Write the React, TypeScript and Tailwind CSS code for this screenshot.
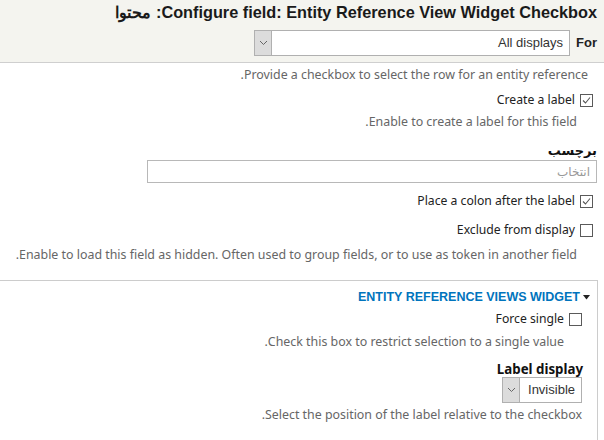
import React from "react";

const body = { fontFamily: '"Noto Sans", "DejaVu Sans", sans-serif' };
const arial = { fontFamily: '"Liberation Sans", Arial, sans-serif' };

function Check({ checked }: { checked?: boolean }) {
  return (
    <span className="inline-flex h-[13px] w-[13px] shrink-0 items-center justify-center border border-[#5a5a5a] bg-white">
      {checked && (
        <svg width="11" height="11" viewBox="0 0 11 11">
          <path d="M2 5.5 L4.5 8 L9 2.5" fill="none" stroke="#555" strokeWidth="1.1" />
        </svg>
      )}
    </span>
  );
}

function CheckRow({ label, checked }: { label: string; checked?: boolean }) {
  return (
    <div className="flex h-[16px] items-center gap-[5px] text-[12.2px] leading-[16px] text-[#222]">
      <Check checked={checked} />
      <span>{label}</span>
    </div>
  );
}

function Desc({ children }: { children: React.ReactNode }) {
  return <div className="text-[12.4px] leading-[16px] text-[#666]">{children}</div>;
}

function Select({ value, width }: { value: string; width: string }) {
  return (
    <div className={`flex h-[26px] items-stretch border border-[#b0b0b0] bg-white ${width}`}>
      <span className="flex-1 pr-[6px] text-[13px] leading-[24px] text-[#333]" style={arial}>
        {value}
      </span>
      <span className="flex w-[17px] items-center justify-center border-r border-[#b0b0b0] bg-[#dcdcdc]">
        <svg width="9" height="6" viewBox="0 0 9 6">
          <path d="M1 1 L4.5 4.5 L8 1" fill="none" stroke="#666" strokeWidth="1" />
        </svg>
      </span>
    </div>
  );
}

export default function App() {
  return (
    <div dir="rtl" className="h-[440px] w-[604px] overflow-hidden bg-white" style={body}>
      <div className="border-b border-[#cfcfcf] bg-[#f4f4ef] pb-[6px] pr-[7px] pt-[3px]">
        <h1 className="text-[16.3px] font-bold leading-[19px] text-[#1a1a1a]" style={arial}>
          Configure field: Entity Reference View Widget Checkbox: محتوا
        </h1>
        <div className="mt-[8px] flex items-center gap-[6px]">
          <span className="text-[13px] font-bold text-[#222]" style={arial}>For</span>
          <Select value="All displays" width="w-[316px]" />
        </div>
      </div>

      <div className="pr-[16px] pt-[4px]">
        <Desc>Provide a checkbox to select the row for an entity reference.</Desc>
      </div>

      <div className="pr-[11px] pt-[9px]">
        <CheckRow label="Create a label" checked />
      </div>
      <div className="pr-[27px] pt-[6px]">
        <Desc>Enable to create a label for this field.</Desc>
      </div>

      <div className="pr-[7px] pt-[12px]">
        <div className="text-[13px] font-bold leading-[16px] text-[#111]">برچسب</div>
        <div className="mt-[2px] h-[23px] w-[450px] border border-[#b8b8b8] bg-white pr-[6px] text-[12px] leading-[21px] text-[#999]">
          انتخاب
        </div>
      </div>

      <div className="pr-[11px] pt-[10px]">
        <CheckRow label="Place a colon after the label" checked />
      </div>
      <div className="pr-[11px] pt-[13px]">
        <CheckRow label="Exclude from display" />
      </div>
      <div className="pr-[27px] pt-[9px]">
        <Desc>Enable to load this field as hidden. Often used to group fields, or to use as token in another field.</Desc>
      </div>

      <div className="-ml-[4px] mr-[6px] mt-[17px] border border-[#ccc] pb-[20px]">
        <div className="mt-[8px] flex h-[16px] items-center gap-[3px] pr-[7px]">
          <svg width="7" height="5" viewBox="0 0 7 5">
            <path d="M0 0 L7 0 L3.5 4.5 Z" fill="#222" />
          </svg>
          <span className="text-[12.5px] font-bold leading-[16px] text-[#0074bd]" style={arial}>
            ENTITY REFERENCE VIEWS WIDGET
          </span>
        </div>
        <div className="pr-[15px] pt-[6px]">
          <CheckRow label="Force single" />
        </div>
        <div className="pr-[33px] pt-[7px]">
          <Desc>Check this box to restrict selection to a single value.</Desc>
        </div>
        <div className="pr-[14px] pt-[11px]">
          <div className="text-[13.3px] font-bold leading-[16px] text-[#111]">Label display</div>
          <div className="pr-[1px]">
            <Select value="Invisible" width="w-[80px]" />
          </div>
        </div>
        <div className="pr-[15px] pt-[4px]">
          <Desc>Select the position of the label relative to the checkbox.</Desc>
        </div>
      </div>
    </div>
  );
}
